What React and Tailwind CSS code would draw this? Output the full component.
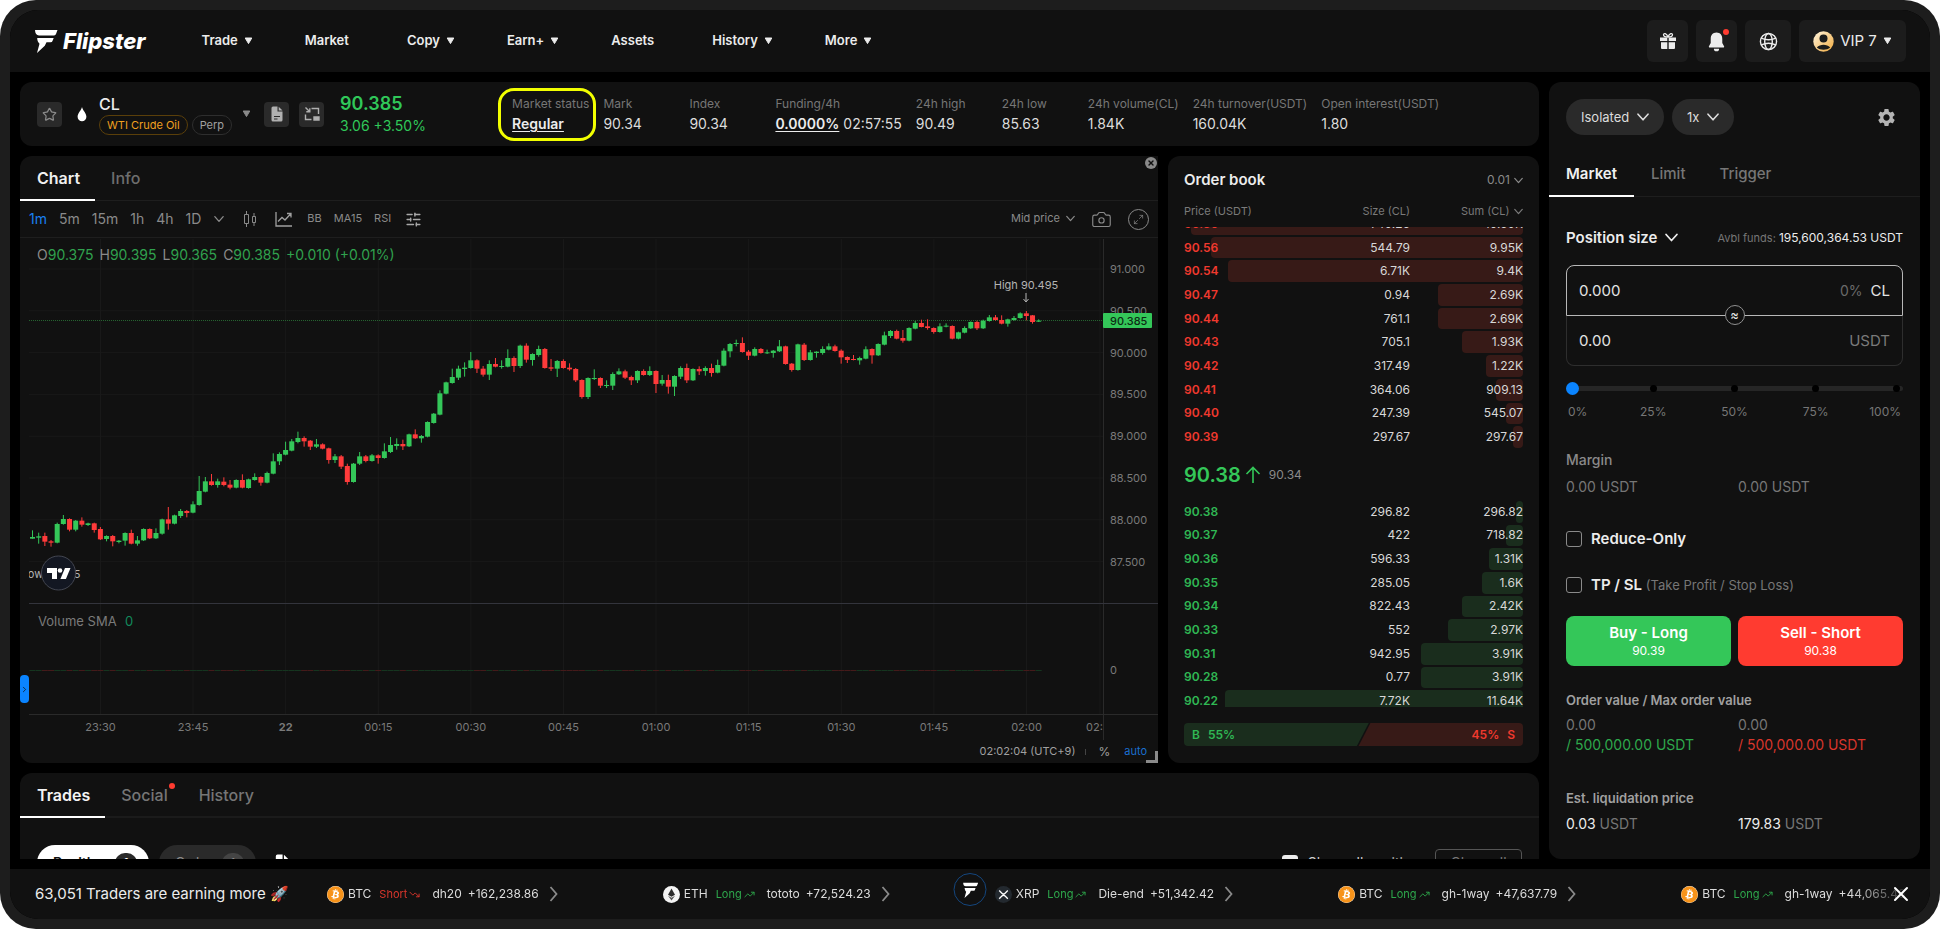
import { useState } from 'react';
import { Camera, ChevronRight, Maximize2, SlidersHorizontal, Star, TrendingDown, TrendingUp, X } from 'lucide-react';
import { FaBitcoin } from 'react-icons/fa';
import { MdSettings } from 'react-icons/md';

const NAV = [
  { label: 'Trade', menu: true },
  { label: 'Market' },
  { label: 'Copy', menu: true },
  { label: 'Earn+', menu: true },
  { label: 'Assets' },
  { label: 'History', menu: true },
  { label: 'More', menu: true },
];

const STATS = [
  { label: 'Mark', value: '90.34' },
  { label: 'Index', value: '90.34' },
  { label: 'Funding/4h', value: '02:57:55', link: '0.0000%' },
  { label: '24h high', value: '90.49' },
  { label: '24h low', value: '85.63' },
  { label: '24h volume(CL)', value: '1.84K' },
  { label: '24h turnover(USDT)', value: '160.04K' },
  { label: 'Open interest(USDT)', value: '1.80' },
];

const INTERVALS = ['1m', '5m', '15m', '1h', '4h', '1D'];

// width is the depth bar share of the row
const ASKS = [
  { price: '90.60', size: '740.26', sum: '10.69K', width: 98 },
  { price: '90.56', size: '544.79', sum: '9.95K', width: 92 },
  { price: '90.54', size: '6.71K', sum: '9.4K', width: 87 },
  { price: '90.47', size: '0.94', sum: '2.69K', width: 25 },
  { price: '90.44', size: '761.1', sum: '2.69K', width: 25 },
  { price: '90.43', size: '705.1', sum: '1.93K', width: 18 },
  { price: '90.42', size: '317.49', sum: '1.22K', width: 11 },
  { price: '90.41', size: '364.06', sum: '909.13', width: 8 },
  { price: '90.40', size: '247.39', sum: '545.07', width: 5 },
  { price: '90.39', size: '297.67', sum: '297.67', width: 3 },
];

const BIDS = [
  { price: '90.38', size: '296.82', sum: '296.82', width: 2 },
  { price: '90.37', size: '422', sum: '718.82', width: 5 },
  { price: '90.36', size: '596.33', sum: '1.31K', width: 10 },
  { price: '90.35', size: '285.05', sum: '1.6K', width: 12 },
  { price: '90.34', size: '822.43', sum: '2.42K', width: 18 },
  { price: '90.33', size: '552', sum: '2.97K', width: 22 },
  { price: '90.31', size: '942.95', sum: '3.91K', width: 30 },
  { price: '90.28', size: '0.77', sum: '3.91K', width: 30 },
  { price: '90.22', size: '7.72K', sum: '11.64K', width: 88 },
];

const TICKERS = [
  { coin: 'BTC', side: 'Short', name: 'dh20', pnl: '+162,238.86' },
  { coin: 'ETH', side: 'Long', name: 'tototo', pnl: '+72,524.23' },
  { coin: 'XRP', side: 'Long', name: 'Die-end', pnl: '+51,342.42' },
  { coin: 'BTC', side: 'Long', name: 'gh-1way', pnl: '+47,637.79' },
  { coin: 'BTC', side: 'Long', name: 'gh-1way', pnl: '+44,065.46' },
];

// one candle per minute: [up, bodyTop, bodyBottom, high, low], in thirds of a pixel
const CANDLES = [
  [1, 951, 956, 931, 956], [1, 949, 953, 938, 971], [0, 948, 965, 938, 978], [0, 964, 968, 960, 980],
  [1, 912, 968, 908, 970], [1, 897, 912, 885, 914], [0, 897, 929, 895, 934], [1, 902, 929, 900, 934],
  [0, 902, 914, 892, 920], [1, 910, 915, 908, 918], [0, 910, 930, 908, 938], [0, 927, 958, 921, 960],
  [1, 948, 957, 946, 964], [0, 948, 964, 945, 979], [1, 962, 966, 960, 970], [1, 939, 962, 937, 977],
  [0, 939, 971, 929, 973], [1, 961, 971, 948, 977], [1, 927, 961, 925, 963], [0, 927, 955, 925, 957],
  [1, 939, 955, 925, 957], [1, 898, 941, 896, 944], [0, 898, 911, 861, 929], [1, 886, 911, 884, 913],
  [1, 873, 888, 867, 894], [0, 873, 879, 870, 892], [1, 853, 878, 844, 880], [1, 813, 855, 768, 857],
  [1, 784, 815, 771, 817], [0, 784, 795, 762, 797], [1, 784, 795, 776, 803], [0, 785, 795, 772, 799],
  [0, 794, 803, 780, 808], [1, 780, 803, 778, 805], [0, 780, 803, 763, 805], [1, 778, 804, 776, 806],
  [1, 771, 780, 760, 782], [0, 771, 788, 769, 797], [1, 759, 788, 755, 790], [1, 724, 761, 700, 763],
  [1, 702, 724, 697, 735], [1, 690, 704, 665, 706], [1, 664, 692, 657, 694], [1, 654, 666, 635, 670],
  [0, 654, 664, 649, 680], [0, 662, 680, 660, 690], [1, 673, 680, 657, 684], [0, 673, 686, 670, 688],
  [0, 685, 720, 683, 731], [1, 709, 720, 702, 729], [0, 709, 740, 705, 747], [0, 738, 786, 731, 794],
  [1, 731, 786, 729, 788], [1, 709, 731, 696, 735], [0, 709, 723, 705, 727], [1, 706, 723, 702, 725],
  [0, 706, 714, 703, 731], [1, 694, 714, 670, 716], [1, 675, 696, 651, 699], [1, 672, 678, 655, 689],
  [0, 672, 679, 659, 690], [1, 643, 679, 641, 681], [0, 643, 655, 628, 657], [1, 648, 655, 645, 668],
  [1, 606, 650, 604, 652], [1, 581, 609, 579, 611], [1, 520, 584, 511, 586], [1, 487, 521, 485, 523],
  [1, 471, 489, 446, 491], [1, 446, 473, 437, 480], [1, 443, 447, 427, 470], [1, 421, 444, 396, 446],
  [0, 421, 446, 418, 459], [0, 446, 464, 438, 470], [1, 432, 464, 421, 480], [0, 432, 440, 414, 442],
  [1, 438, 441, 421, 446], [1, 414, 440, 388, 442], [0, 414, 438, 409, 456], [1, 377, 438, 374, 444],
  [0, 377, 419, 370, 428], [1, 402, 420, 400, 437], [1, 387, 405, 377, 410], [0, 387, 444, 384, 446],
  [0, 442, 446, 417, 453], [1, 423, 446, 420, 471], [0, 423, 444, 418, 446], [0, 443, 448, 430, 452],
  [0, 447, 481, 444, 486], [0, 480, 531, 478, 536], [1, 474, 531, 472, 537], [1, 474, 477, 448, 480],
  [0, 474, 497, 472, 504], [1, 495, 498, 481, 504], [1, 462, 497, 457, 510], [1, 454, 463, 445, 465],
  [0, 454, 473, 449, 477], [0, 471, 481, 467, 495], [1, 453, 481, 451, 489], [0, 453, 465, 448, 467],
  [1, 453, 465, 439, 468], [0, 453, 492, 451, 519], [1, 480, 491, 465, 497], [0, 480, 500, 464, 521],
  [1, 468, 500, 466, 528], [1, 444, 470, 439, 477], [0, 444, 481, 431, 489], [1, 447, 481, 445, 483],
  [0, 447, 454, 439, 465], [1, 444, 453, 439, 467], [0, 444, 459, 431, 470], [1, 435, 458, 419, 460],
  [1, 392, 437, 385, 439], [1, 372, 394, 369, 412], [1, 369, 372, 359, 379], [0, 369, 396, 352, 398],
  [0, 395, 407, 390, 420], [1, 387, 407, 382, 409], [0, 387, 399, 384, 401], [1, 397, 400, 389, 402],
  [1, 392, 399, 390, 413], [1, 379, 394, 360, 396], [0, 379, 432, 377, 434], [0, 431, 450, 429, 455],
  [1, 373, 450, 371, 452], [0, 374, 420, 369, 423], [1, 397, 420, 390, 422], [1, 395, 399, 394, 413],
  [1, 387, 399, 379, 404], [1, 379, 389, 370, 391], [0, 379, 393, 374, 395], [0, 392, 412, 388, 431],
  [0, 411, 420, 409, 429], [0, 417, 420, 405, 421], [1, 414, 421, 410, 434], [1, 388, 416, 379, 418],
  [0, 387, 406, 385, 431], [1, 372, 406, 370, 408], [1, 346, 374, 335, 376], [1, 333, 348, 330, 354],
  [0, 333, 356, 329, 358], [0, 354, 362, 330, 368], [1, 324, 362, 322, 364], [1, 309, 326, 303, 328],
  [0, 309, 321, 299, 322], [0, 319, 324, 298, 329], [0, 324, 336, 322, 341], [1, 319, 336, 310, 338],
  [1, 317, 320, 310, 322], [0, 318, 356, 316, 358], [1, 337, 356, 335, 358], [1, 324, 338, 319, 340],
  [1, 306, 325, 304, 327], [0, 306, 325, 302, 330], [1, 302, 325, 299, 327], [1, 292, 303, 285, 305],
  [0, 292, 300, 285, 302], [0, 300, 311, 286, 313], [1, 298, 311, 296, 320], [1, 294, 300, 288, 302],
  [1, 280, 294, 277, 296], [0, 280, 288, 273, 301], [0, 286, 306, 285, 311], [1, 302, 305, 298, 306],
];

const PRICE_TICKS = ['91.000', '90.500', '90.000', '89.500', '89.000', '88.500', '88.000', '87.500'];
const TIME_TICKS = ['23:30', '23:45', '22', '00:15', '00:30', '00:45', '01:00', '01:15', '01:30', '01:45', '02:00'];

const Caret = ({ className = '' }) => (
  <svg width="9" height="8" viewBox="0 0 9 8" className={className} aria-hidden="true">
    <path d="M1.2 1h6.6L4.5 6.6z" fill="currentColor" stroke="currentColor" strokeLinejoin="round" />
  </svg>
);

const Chevron = ({ size = 9, className = '' }) => (
  <svg width={size} height={size} viewBox="0 0 12 12" className={className} fill="none" stroke="currentColor" strokeWidth="1.6" aria-hidden="true">
    <path d="M1 3.200l5 5.600 5-5.600" strokeLinecap="round" strokeLinejoin="round" />
  </svg>
);

const FlipMark = ({ className = '' }) => (
  <svg viewBox="0 0 24 24" className={className} fill="currentColor" aria-hidden="true">
    <path d="M1 1h22.5l-1.500 4a2 2 0 0 1-1.900 1.400H5C2.600 6.400 1 4.300 1 1z" />
    <path d="M3.200 9h16.500l-1.200 3a2 2 0 0 1-1.900 1.300h-4.100l-1.700 3.400L3 24l2.500-9.300C4 13.200 3.200 11.300 3.200 9z" />
  </svg>
);

const GiftIcon = () => (
  <svg width="18" height="18" viewBox="0 0 18 18" fill="currentColor" aria-hidden="true">
    <path d="M1 5.500h7.300v3.600H1zM9.700 5.500H17v3.600H9.700zM2 10.300h6.300V17H3a1 1 0 0 1-1-1zM9.700 10.300H16V16a1 1 0 0 1-1 1H9.700z" />
    <path d="M9 5C7.500 1.200 4.600.8 4.500 2.800 4.500 4.400 6.500 5 9 5zm0 0c1.500-3.800 4.400-4.200 4.500-2.200C13.500 4.400 11.500 5 9 5z" fill="none" stroke="currentColor" strokeWidth="1.300" />
  </svg>
);

const BellIcon = () => (
  <svg width="19" height="21" viewBox="0 0 18 20" fill="currentColor" aria-hidden="true">
    <path d="M9 1.500c3.600 0 5.500 2.700 5.500 6v4l1.700 3c.3.600 0 1.200-.7 1.200h-13c-.7 0-1-.6-.7-1.200l1.700-3v-4c0-3.300 1.900-6 5.500-6zM6.500 16.800h5a2.500 2.500 0 0 1-5 0z" />
  </svg>
);

const GlobeIcon = () => (
  <svg width="19" height="19" viewBox="0 0 20 20" fill="none" stroke="currentColor" strokeWidth="1.500" aria-hidden="true">
    <circle cx="10" cy="10" r="8.500" />
    <ellipse cx="10" cy="10" rx="4" ry="8.500" />
    <path d="M2.300 6.500c4.500 2 11 2 15.400 0M2.300 13.500c4.500-2 11-2 15.400 0" />
  </svg>
);

const DocIcon = ({ className = '' }) => (
  <svg width="16" height="16" viewBox="0 0 16 16" className={className} aria-hidden="true">
    <path d="M2.500 2A1.500 1.500 0 0 1 4 .5h4.500V5.500H13.500V14A1.500 1.500 0 0 1 12 15.500H4A1.500 1.500 0 0 1 2.500 14z" fill="currentColor" />
    <path d="M9.700.7l3.800 3.700H9.700z" fill="currentColor" />
    <path d="M5 10.500h6M5 13h3.500" stroke="#2a2a2a" strokeWidth="1.200" />
  </svg>
);

const FloatIcon = () => (
  <svg width="16" height="16" viewBox="0 0 16 16" fill="none" stroke="currentColor" strokeWidth="1.400" aria-hidden="true">
    <path d="M7.500 2.500H14.500V8M1.500 8.500v5h6" />
    <path d="M1.500 1.500l4 4M5.800 2.300v3.500H2.300" />
    <path d="M10 11h5v3h-5z" fill="currentColor" />
  </svg>
);

const CandlesIcon = () => (
  <svg width="16" height="18" viewBox="0 0 16 18" fill="none" stroke="currentColor" aria-hidden="true">
    <path d="M2.500 4.500h4v9h-4zM4.500 1v3.500M4.500 13.500V17M10.500 6.500h3v6h-3zM12 3v3.500M12 12.500V16" />
  </svg>
);

const IndicatorIcon = () => (
  <svg width="18" height="16" viewBox="0 0 18 16" fill="none" stroke="currentColor" strokeWidth="1.300" aria-hidden="true">
    <path d="M1 1v14h16M3 10.500l4-4 3 2.500 5.500-6M12 2.500h4v4" />
  </svg>
);

const CoinIcon = ({ coin }) => {
  if (coin === 'BTC') {
    return (
      <span className="rounded-full bg-white text-[#f7931a]">
        <FaBitcoin size={17} />
      </span>
    );
  }
  if (coin === 'ETH') {
    return (
      <svg width="17" height="17" viewBox="0 0 17 17" aria-hidden="true">
        <circle cx="8.500" cy="8.500" r="8.500" fill="#f4f4f4" />
        <path d="M8.500 2.500L5 8.700l3.500 2 3.500-2z" fill="#2b2b2b" />
        <path d="M5 9.800l3.500 4.700L12 9.800l-3.500 2z" fill="#555" />
      </svg>
    );
  }
  return (
    <svg width="17" height="17" viewBox="0 0 17 17" fill="none" aria-hidden="true">
      <circle cx="8.500" cy="8.500" r="8.500" fill="#23292f" />
      <path d="M4.200 4.500l2.700 2.700a2.300 2.300 0 0 0 3.200 0l2.700-2.700M4.200 12.700L6.900 10a2.300 2.300 0 0 1 3.200 0l2.700 2.700" stroke="#fff" strokeWidth="1.300" />
    </svg>
  );
};

const Picker = ({ label, text, className = 'gap-1', size = 9 }) => (
  <span className={`relative inline-flex items-center ${className}`}>
    <select aria-label={label} className="appearance-none bg-transparent outline-none">
      <option>{text}</option>
    </select>
    <Chevron size={size} className="pointer-events-none" />
  </span>
);

const TopNav = () => (
  <header className="flex h-[62px] shrink-0 items-center bg-[#111] pr-6 pl-6">
    <a href="#home" className="mr-14 flex items-center gap-[5px] text-white">
      <FlipMark className="h-6 w-6" />
      <span className="text-[22px] leading-6 font-extrabold italic">Flipster</span>
    </a>
    <nav className="flex items-center gap-[52px] text-[13px] font-semibold text-[#ececec]">
      {NAV.map((item) =>
        item.menu ? (
          <button key={item.label} className="flex items-center gap-1.5">
            {item.label}
            <Caret />
          </button>
        ) : (
          <a key={item.label} href={`#${item.label.toLowerCase()}`} className="pr-1.5">
            {item.label}
          </a>
        )
      )}
    </nav>
    <div className="ml-auto flex gap-2 text-[#ececec]">
      <button aria-label="Rewards" className="flex h-[42px] w-[41px] items-center justify-center rounded-md bg-[#1c1c1c]">
        <GiftIcon />
      </button>
      <button aria-label="Notifications" className="relative flex h-[42px] w-[41px] items-center justify-center rounded-md bg-[#1c1c1c]">
        <BellIcon />
        <span className="absolute top-[9px] right-2 h-1.5 w-1.5 rounded-full bg-[#ff3b30]"></span>
      </button>
      <button aria-label="Language" className="flex h-[42px] w-[46px] items-center justify-center rounded-md bg-[#1c1c1c]">
        <GlobeIcon />
      </button>
      <button className="flex h-[42px] w-[107px] items-center justify-center gap-1.5 rounded-md bg-[#1c1c1c] text-[15px]">
        <svg width="21" height="21" viewBox="0 0 21 21" aria-hidden="true">
          <defs>
            <linearGradient id="gold" x1="0" y1="0" x2="1" y2="1">
              <stop offset="0" stopColor="#fff6e0" />
              <stop offset="1" stopColor="#f0a93c" />
            </linearGradient>
          </defs>
          <circle cx="10.500" cy="10.500" r="10.200" fill="url(#gold)" />
          <circle cx="10.500" cy="7.600" r="4" fill="#1c1c1c" />
          <path d="M3.800 16.500c3.500-3.600 9.900-3.600 13.400 0-3.400 3-10 3-13.400 0z" fill="#1c1c1c" />
        </svg>
        VIP 7
        <Caret />
      </button>
    </div>
  </header>
);

const MarketHeader = () => (
  <section className="flex h-16 shrink-0 items-center rounded-xl bg-[#111] px-[17px]">
    <button aria-label="Favorite" className="flex h-[25px] w-[25px] items-center justify-center rounded bg-[#2a2a2a] text-[#8a8a8a]">
      <Star size={15} />
    </button>
    <svg width="10" height="15" viewBox="0 0 10 15" className="ml-[15px]" fill="#fff" aria-hidden="true">
      <path d="M5 0c.8 3.500 4.400 6.200 4.400 9.800a4.400 4.400 0 0 1-8.800 0C.6 6.200 4.200 3.500 5 0z" />
    </svg>
    <div className="ml-3">
      <h1 className="text-base leading-[22px] font-medium text-[#ececec]">CL</h1>
      <div className="flex gap-1 text-[11px]">
        <span className="rounded-full border border-[#5a3f0a] px-[7px] leading-[18px] text-[#f0a020]">WTI Crude Oil</span>
        <span className="rounded-full border border-[#2e2e2e] px-[7px] leading-[18px] text-[#a0a0a0]">Perp</span>
      </div>
    </div>
    <button aria-label="Select market" className="ml-2.5 text-[#8a8a8a]">
      <Caret />
    </button>
    <button aria-label="Contract details" className="ml-[13px] flex h-[25px] w-[25px] items-center justify-center rounded bg-[#2a2a2a] text-[#b0b0b0]">
      <DocIcon />
    </button>
    <button aria-label="Float window" className="ml-2.5 flex h-[25px] w-[25px] items-center justify-center rounded bg-[#2a2a2a] text-[#b0b0b0]">
      <FloatIcon />
    </button>
    <div className="ml-4 w-[172px] text-[#30c759]">
      <p className="text-lg leading-6 font-semibold">90.385</p>
      <p className="text-sm leading-5">3.06 +3.50%</p>
    </div>
    <dl className="flex gap-3.5 text-sm whitespace-nowrap text-[#dcdcdc]">
      <div className="relative">
        <span className="absolute -top-1.5 -right-[7px] -bottom-[7px] -left-3.5 rounded-2xl border-[3px] border-[#f2ff00]"></span>
        <dt className="text-xs leading-5 text-[#767676]">Market status</dt>
        <dd className="leading-5">
          <a href="#status" className="font-semibold text-[#ececec] underline underline-offset-2">Regular</a>
        </dd>
      </div>
      {STATS.map((stat) => (
        <div key={stat.label} className="min-w-[72px]">
          <dt className="text-xs leading-5 text-[#767676]">{stat.label}</dt>
          <dd className="leading-5">
            {stat.link && (
              <a href="#funding" className="mr-1 font-semibold text-[#ececec] underline underline-offset-2">{stat.link}</a>
            )}
            {stat.value}
          </dd>
        </div>
      ))}
    </dl>
  </section>
);

const PriceChart = () => {
  const candleX = (i) => 3.5 + i * 6.173;
  const toY = (v) => v / 3 - 19;
  const tickX = (i) => 71.5 + i * 92.6;
  const tickY = (i) => 30 + i * 41.8;

  return (
    <svg className="block h-full w-full" fontFamily="Inter, sans-serif" role="img" aria-label="CL price chart">
      <defs>
        <clipPath id="plot">
          <rect x="0" y="0" width="1073" height="502" />
        </clipPath>
      </defs>
      <g stroke="#191919">
        {PRICE_TICKS.map((tick, i) => (
          <line key={tick} x1="0" x2="1074" y1={tickY(i)} y2={tickY(i)} />
        ))}
        {TIME_TICKS.map((tick, i) => (
          <line key={tick} x1={tickX(i)} x2={tickX(i)} y1="0" y2="475" />
        ))}
        <line x1="1071" x2="1071" y1="0" y2="475" />
      </g>
      <g stroke="#2a2a2a">
        <line x1="1074.5" x2="1074.500" y1="0" y2="502" />
        <line x1="0" x2="100%" y1="475.500" y2="475.500" />
      </g>
      <line x1="0" x2="100%" y1="364.500" y2="364.500" stroke="#33343c" />
      <line x1="0" x2="1074" y1="81.500" y2="81.500" stroke="#25632f" strokeDasharray="1 1" />

      {CANDLES.map(([up, top, bottom, high, low], i) => {
        const color = up ? '#34c759' : '#ff3b3b';
        return (
          <g key={i}>
            <line x1={candleX(i)} x2={candleX(i)} y1={toY(high)} y2={toY(low)} stroke={color} />
            <rect x={candleX(i) - 2.5} y={toY(top)} width="5" height={Math.max(1, (bottom - top) / 3)} fill={color} />
            <line x1={candleX(i) - 3} x2={candleX(i) + 3} y1="431.500" y2="431.500" stroke={up ? '#15351f' : '#451a1a'} />
          </g>
        );
      })}

      <g fill="#7a7a7a" fontSize="11">
        {PRICE_TICKS.map((tick, i) => (
          <text key={tick} x="1081" y={tickY(i) + 4}>{tick}</text>
        ))}
        <text x="1081" y="435">0</text>
        {TIME_TICKS.map((tick, i) => (
          <text key={tick} x={tickX(i)} y="492" textAnchor="middle" fontWeight={tick === '22' ? 700 : 400}>{tick}</text>
        ))}
        <text x="1057" y="492">02:</text>
      </g>

      <g fill="#b4b4b4" fontSize="11" textAnchor="middle" clipPath="url(#plot)">
        <text x="997" y="50">High 90.495</text>
        <text x="22" y="339">Low 87.675</text>
      </g>
      <path d="M997 54v8M994.500 60l2.500 3 2.500-3" stroke="#b4b4b4" fill="none" />

      <rect x="1074" y="74" width="49" height="15" rx="1" fill="#34c759" />
      <text x="1081" y="86" fontSize="11" fill="#0d2a14" fontWeight="500">90.385</text>

      <circle cx="29.500" cy="334" r="17" fill="#131722" stroke="#434651" />
      <g fill="#fff">
        <path d="M18 329h10v11h-5v-6h-5z" />
        <circle cx="31" cy="331.500" r="2.300" />
        <path d="M36 329h5.500l-4.600 11h-5.500z" />
      </g>

      <text x="8" y="21" fontSize="14" fill="#30a14e">
        <tspan fill="#8a8a8a">O</tspan>90.375
        <tspan fill="#8a8a8a" dx="6">H</tspan>90.395
        <tspan fill="#8a8a8a" dx="6">L</tspan>90.365
        <tspan fill="#8a8a8a" dx="6">C</tspan>90.385
        <tspan dx="6">+0.010 (+0.01%)</tspan>
      </text>
      <g fontSize="13">
        <text x="9" y="387" fill="#7a7a7a">Volume SMA</text>
        <text x="96" y="387" fill="#128a5c">0</text>
      </g>
    </svg>
  );
};

const ChartPanel = () => {
  const [interval, setChartInterval] = useState('1m');

  return (
    <section className="relative flex min-w-0 flex-1 flex-col rounded-l-xl bg-[#111]">
      <div className="flex h-[45px] shrink-0 border-b border-[#1e1e1e] text-base">
        <button className="-mb-px border-b-2 border-white pr-[15px] pl-[17px] font-semibold text-[#f0f0f0]">Chart</button>
        <button className="px-4 font-medium text-[#6e6e6e]">Info</button>
      </div>
      <div className="flex h-[37px] shrink-0 items-center border-b border-[#1e1e1e] pr-[9px] pl-[9px] text-sm text-[#8a8a8a]">
        <div className="flex gap-3">
          {INTERVALS.map((item) => (
            <button
              key={item}
              onClick={() => setChartInterval(item)}
              className={interval === item ? 'text-[#1a7ff0]' : 'text-[#8a8a8a]'}
            >
              {item}
            </button>
          ))}
        </div>
        <button aria-label="More intervals" className="ml-[13px]"><Chevron size={10} /></button>
        <button aria-label="Chart type" className="ml-[18px]"><CandlesIcon /></button>
        <button aria-label="Indicators" className="ml-[17px] text-[#a0a0a0]"><IndicatorIcon /></button>
        <div className="ml-3.5 flex gap-3 text-[11px]">
          <button>BB</button>
          <button>MA15</button>
          <button>RSI</button>
        </div>
        <button aria-label="Chart settings" className="ml-3.5 text-[#a8a8a8]"><SlidersHorizontal size={17} /></button>
        <Picker label="Price type" text="Mid price" className="ml-auto gap-1.5 text-[11px]" />
        <button aria-label="Screenshot" className="ml-4"><Camera size={21} strokeWidth={1.3} /></button>
        <button aria-label="Fullscreen" className="ml-4 flex h-[21px] w-[21px] items-center justify-center rounded-full border border-[#8a8a8a]">
          <Maximize2 size={11} strokeWidth={1.5} />
        </button>
      </div>
      <div className="min-h-0 flex-1 pt-px pl-[9px]">
        <PriceChart />
      </div>
      <div className="flex h-[23px] shrink-0 items-center justify-end pr-[11px] text-[11px] text-[#a0a0a0]">
        <span>02:02:04 (UTC+9)</span>
        <span className="mr-3 ml-2.5 h-1.5 w-px bg-[#444]"></span>
        <button className="mr-3.5 text-xs">%</button>
        <button className="text-[#1a6fd0]">auto</button>
      </div>
      <button aria-label="Close chart" className="absolute top-px right-px flex h-3 w-3 items-center justify-center rounded-full bg-[#8a8a8a] text-[#111]">
        <X size={8} strokeWidth={4} />
      </button>
      <span className="absolute right-0 bottom-0 h-3 w-3 border-r-[3px] border-b-[3px] border-[#8a8a8a]"></span>
      <button aria-label="Open drawing tools" className="absolute bottom-[60px] left-0 flex h-7 w-[9px] items-center justify-center rounded-[4px] bg-[#0a84ff] text-[#111]">
        <ChevronRight size={9} />
      </button>
    </section>
  );
};

const BookRows = ({ rows, side }) => (
  <>
    {rows.map((row) => (
      <tr key={row.price} className="relative">
        <td className={`w-[110px] p-0 font-semibold ${side === 'ask' ? 'text-[#f0392e]' : 'text-[#30b854]'}`}>
          <span className="relative z-10">{row.price}</span>
          <span
            className={`absolute inset-y-px right-0 rounded ${side === 'ask' ? 'bg-[#371a17]' : 'bg-[#1a2d1d]'}`}
            style={{ width: `${row.width}%` }}
          ></span>
        </td>
        <td className="relative z-10 p-0 text-right">{row.size}</td>
        <td className="relative z-10 w-[113px] p-0 text-right">{row.sum}</td>
      </tr>
    ))}
  </>
);

const OrderBook = () => (
  <section className="flex w-[371px] shrink-0 flex-col rounded-xl bg-[#111] px-4 text-[#d8d8d8]">
    <div className="mt-[13px] flex h-[22px] items-center justify-between">
      <h2 className="text-[15px] font-semibold text-[#ececec]">Order book</h2>
      <Picker label="Tick size" text="0.01" className="gap-1 text-xs text-[#8a8a8a]" />
    </div>
    <div className="mt-2.5 grid h-5 grid-cols-3 items-center text-[11px] text-[#7a7a7a]">
      <span>Price (USDT)</span>
      <span className="text-right">Size (CL)</span>
      <Picker label="Sum unit" text="Sum (CL)" className="justify-end gap-1" />
    </div>
    <div className="mt-1.5 flex h-[222px] shrink-0 flex-col justify-end overflow-hidden">
      <table className="h-[237px] w-full shrink-0 text-xs">
        <tbody>
          <BookRows rows={ASKS} side="ask" />
        </tbody>
      </table>
    </div>
    <div className="flex h-[51px] shrink-0 items-center">
      <span className="text-xl font-semibold text-[#34c759]">90.38</span>
      <svg width="16" height="18" viewBox="0 0 16 18" className="ml-1 text-[#34c759]" fill="none" stroke="currentColor" strokeWidth="1.600" aria-hidden="true">
        <path d="M8 17V1.500M1.500 8L8 1.500 14.500 8" />
      </svg>
      <span className="ml-2 text-xs text-[#8a8a8a]">90.34</span>
    </div>
    <div className="h-[207px] shrink-0 overflow-hidden">
      <table className="h-[213px] w-full text-xs">
        <tbody>
          <BookRows rows={BIDS} side="bid" />
        </tbody>
      </table>
    </div>
    <div className="relative mt-4 flex h-[23px] shrink-0 items-center justify-between overflow-hidden rounded px-2 text-xs font-semibold">
      <span className="absolute inset-0 bg-[#1a2d1d] [clip-path:polygon(0_0,54.5%_0,51%_100%,0_100%)]"></span>
      <span className="absolute inset-0 bg-[#371a17] [clip-path:polygon(55%_0,100%_0,100%_100%,51.500%_100%)]"></span>
      <span className="relative flex gap-2 text-[#30b854]"><b className="font-semibold">B</b>55%</span>
      <span className="relative flex gap-2 text-[#f0392e]">45%<b className="font-semibold">S</b></span>
    </div>
  </section>
);

const TradesPanel = () => (
  <section className="flex min-h-0 flex-1 flex-col overflow-hidden rounded-t-xl bg-[#111]">
    <div className="flex h-[45px] shrink-0 border-b-2 border-[#1b1b1b] text-base">
      <button className="-mb-0.5 border-b-2 border-white pr-[15px] pl-[17px] font-semibold text-[#f4f4f4]">Trades</button>
      <button className="relative pr-[15px] pl-4 font-medium text-[#767676]">
        Social
        <span className="absolute top-2.5 right-2 h-1.5 w-1.5 rounded-full bg-[#ff3b30]"></span>
      </button>
      <button className="px-4 font-medium text-[#767676]">History</button>
    </div>
    <div className="mt-[27px] flex h-9 shrink-0 items-center px-[17px] text-sm">
      <button className="flex h-9 w-28 items-center justify-between rounded-full bg-white pr-3 pl-4 text-sm font-semibold text-[#111]">
        Positions
        <span className="flex h-5 w-[22px] items-center justify-center rounded-full bg-[#2a2a2a] text-[11px] text-white">1</span>
      </button>
      <button className="ml-2.5 flex h-9 w-[97px] items-center justify-between rounded-full bg-[#2a2a2a] pr-3 pl-4 text-sm text-[#8a8a8a]">
        Orders
        <span className="flex h-5 w-[22px] items-center justify-center rounded-full bg-[#444] text-[11px]">1</span>
      </button>
      <button aria-label="Position report" className="ml-[17px] text-white"><DocIcon className="h-[18px] w-[18px]" /></button>
      <label className="ml-auto flex items-center gap-2.5 text-[#d0d0d0]">
        <input type="checkbox" defaultChecked className="h-4 w-4 appearance-none rounded-[3px] bg-[#ececec]" />
        Show all positions
      </label>
      <button className="ml-2 h-[29px] w-[87px] rounded border border-[#555] text-[#777]">Close all</button>
    </div>
  </section>
);

const OrderForm = () => {
  const [percent, setPercent] = useState(0);

  return (
    <aside className="w-[371px] shrink-0 rounded-xl bg-[#111] px-[17px] pt-[17px] text-sm text-[#767676]">
      <div className="flex items-center gap-2">
        <Picker label="Margin mode" text="Isolated" size={12} className="h-9 gap-[7px] rounded-full bg-[#2a2a2a] px-[15px] text-[13px] text-[#dcdcdc]" />
        <Picker label="Leverage" text="1x" size={12} className="h-9 gap-[7px] rounded-full bg-[#2a2a2a] px-[15px] text-[13px] text-[#dcdcdc]" />
        <button aria-label="Order settings" className="mr-1.5 ml-auto text-[#b4b4b4]"><MdSettings size={21} /></button>
      </div>

      <div className="-mx-[17px] mt-[17px] flex h-[45px] border-b border-[#1e1e1e] text-[15px]">
        <button className="-mb-px border-b-2 border-white px-[17px] font-semibold text-[#f0f0f0]">Market</button>
        <button className="px-[17px] font-medium">Limit</button>
        <button className="px-[17px] font-medium">Trigger</button>
      </div>

      <div className="mt-[29px] flex h-6 items-center justify-between">
        <Picker label="Order size type" text="Position size" size={13} className="gap-[7px] text-[15px] font-semibold text-[#ececec]" />
        <p className="text-[11px]">Avbl funds: <span className="text-xs text-[#ececec]">195,600,364.53 USDT</span></p>
      </div>

      <div className="relative mt-[15px] text-[15px] text-[#e4e4e4]">
        <label className="flex h-[51px] items-center rounded-t-lg border border-[#b8b8b8] px-3">
          <input aria-label="Size in CL" defaultValue="0.000" className="min-w-0 flex-1 bg-transparent outline-none" />
          <span className="text-sm text-[#6a6a6a]">{percent}%</span>
          <span className="ml-2">CL</span>
        </label>
        <label className="flex h-[50px] items-center rounded-b-lg border border-t-0 border-[#2e2e2e] px-3">
          <input aria-label="Size in USDT" defaultValue="0.00" className="min-w-0 flex-1 bg-transparent outline-none" />
          <span className="text-[#7a7a7a]">USDT</span>
        </label>
        <span className="absolute top-10 left-1/2 flex h-5 w-5 -translate-x-1/2 items-center justify-center rounded-full border border-[#909090] bg-[#111] text-[13px] leading-none">≈</span>
      </div>

      <div className="relative mt-4 flex h-[13px] items-center">
        <div className="h-[5px] w-full rounded-full bg-[#262626]"></div>
        <div className="absolute inset-x-[3px] flex justify-between">
          {[0, 25, 50, 75, 100].map((stop) => (
            <span key={stop} className="h-[7px] w-[7px] rounded-full bg-black"></span>
          ))}
        </div>
        <input
          type="range"
          aria-label="Size percent"
          value={percent}
          onChange={(e) => setPercent(Number(e.target.value))}
          className="absolute inset-0 w-full appearance-none bg-transparent [&::-webkit-slider-thumb]:h-[13px] [&::-webkit-slider-thumb]:w-[13px] [&::-webkit-slider-thumb]:appearance-none [&::-webkit-slider-thumb]:rounded-full [&::-webkit-slider-thumb]:bg-[#0a84ff]"
        />
      </div>
      <div className="-mx-2 mt-[7px] flex justify-between text-xs leading-5">
        <span className="w-7 pl-2.5">0%</span>
        <span className="flex w-7 justify-center">25%</span>
        <span className="flex w-7 justify-center">50%</span>
        <span className="flex w-7 justify-center">75%</span>
        <span className="flex w-7 justify-end pr-2.5">100%</span>
      </div>

      <h3 className="mt-7 leading-5 font-medium text-[#8a8a8a]">Margin</h3>
      <div className="mt-[7px] grid grid-cols-2 gap-[7px] leading-5">
        <span>0.00 USDT</span>
        <span>0.00 USDT</span>
      </div>

      <label className="mt-8 flex h-5 items-center gap-[9px] text-[15px] font-semibold text-[#ececec]">
        <input type="checkbox" className="h-4 w-4 appearance-none rounded-[3px] border border-[#8a8a8a]" />
        Reduce-Only
      </label>
      <label className="mt-[26px] flex h-5 items-center gap-[9px] text-[15px] font-semibold text-[#ececec]">
        <input type="checkbox" className="h-4 w-4 appearance-none rounded-[3px] border border-[#8a8a8a]" />
        <span>
          TP / SL <span className="text-[13px] font-normal text-[#767676]">(Take Profit / Stop Loss)</span>
        </span>
      </label>

      <div className="mt-[21px] grid grid-cols-2 gap-[7px] text-white">
        <button className="h-[50px] rounded-lg bg-[#34c759]">
          <span className="block text-[15px] leading-5 font-semibold">Buy - Long</span>
          <span className="block text-xs leading-4">90.39</span>
        </button>
        <button className="h-[50px] rounded-lg bg-[#ff3b30]">
          <span className="block text-[15px] leading-5 font-semibold">Sell - Short</span>
          <span className="block text-xs leading-4">90.38</span>
        </button>
      </div>

      <h3 className="mt-6 text-[13px] leading-5 font-semibold text-[#a0a0a0]">Order value / Max order value</h3>
      <div className="mt-[5px] grid grid-cols-2 gap-x-[7px] leading-5">
        <span>0.00</span>
        <span>0.00</span>
        <span className="text-[#2ea84c]">/ 500,000.00 USDT</span>
        <span className="text-[#d8362c]">/ 500,000.00 USDT</span>
      </div>

      <h3 className="mt-[33px] text-[13px] leading-5 font-semibold text-[#a0a0a0]">Est. liquidation price</h3>
      <div className="mt-1.5 grid grid-cols-2 gap-[7px] leading-5">
        <span><span className="text-[#ececec]">0.03</span> USDT</span>
        <span><span className="text-[#ececec]">179.83</span> USDT</span>
      </div>
    </aside>
  );
};

const TickerBar = () => (
  <footer className="relative flex h-[50px] shrink-0 items-center bg-[#111] pl-[25px] text-[#dcdcdc]">
    <p className="w-[292px] shrink-0 text-[15px] text-[#ececec]">63,051 Traders are earning more 🚀</p>
    <ul className="flex min-w-0 flex-1 gap-[105px] overflow-hidden text-xs whitespace-nowrap [mask-image:linear-gradient(to_right,black_95%,transparent_99%)]">
      {TICKERS.map((t) => (
        <li key={t.pnl} className="flex shrink-0 items-center">
          <CoinIcon coin={t.coin} />
          <span className="ml-1">{t.coin}</span>
          <span className={`ml-2 flex items-center gap-0.5 text-[11px] ${t.side === 'Long' ? 'text-[#2ea84c]' : 'text-[#d8362c]'}`}>
            {t.side}
            {t.side === 'Long' ? <TrendingUp size={11} /> : <TrendingDown size={11} />}
          </span>
          <span className="ml-3">{t.name}</span>
          <span className="ml-1.5">{t.pnl}</span>
          <svg width="9" height="16" viewBox="0 0 9 16" className="ml-2.5" fill="none" stroke="#8a8a8a" strokeWidth="1.800" aria-hidden="true">
            <path d="M1.500 1L7.500 8l-6 7" />
          </svg>
        </li>
      ))}
    </ul>
    <button aria-label="Close ticker" className="absolute right-[17px] text-white"><X size={24} /></button>
    <button aria-label="Flipster assistant" className="absolute top-1 left-1/2 flex h-[33px] w-[33px] -translate-x-1/2 items-center justify-center rounded-full border border-[#14467e] bg-[#111] text-white">
      <FlipMark className="h-4 w-4" />
    </button>
  </footer>
);

const App = () => (
  <div className="h-screen bg-white font-['Inter',sans-serif]">
    <div className="h-full overflow-hidden rounded-[36px] bg-[#1d1d1d] p-2.5">
      <div className="flex h-full flex-col overflow-hidden rounded-[28px] bg-black">
        <TopNav />
        <main className="flex min-h-0 flex-1 gap-2.5 px-2.5 py-2.5">
          <div className="flex min-w-0 flex-1 flex-col gap-2.5">
            <MarketHeader />
            <div className="flex h-[607px] shrink-0 gap-2.5">
              <ChartPanel />
              <OrderBook />
            </div>
            <TradesPanel />
          </div>
          <OrderForm />
        </main>
        <TickerBar />
      </div>
    </div>
  </div>
);

export default App;
